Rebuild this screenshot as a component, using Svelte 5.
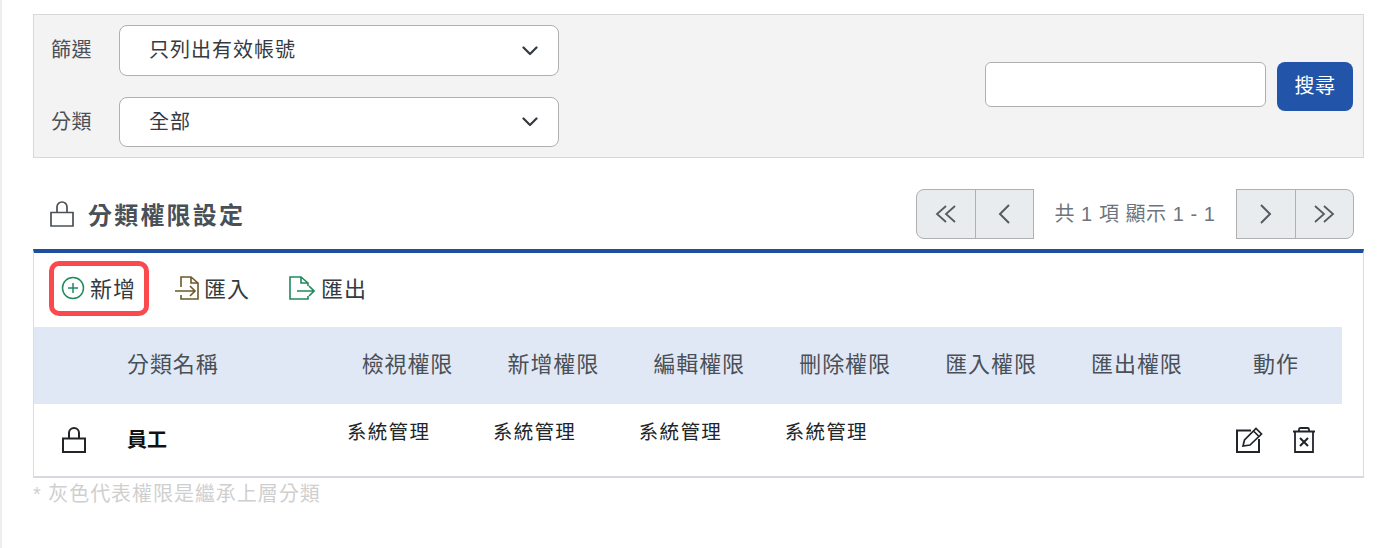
<script>
  const perms = ['檢視權限', '新增權限', '編輯權限', '刪除權限', '匯入權限', '匯出權限'];
  const granted = ['系統管理', '系統管理', '系統管理', '系統管理', '', ''];
</script>

<div class="page">
  <section class="filter">
    <div class="filter-left">
      <div class="field">
        <span class="label">篩選</span>
        <div class="select s1">
          <span>只列出有效帳號</span>
          <svg class="chev" viewBox="0 0 16 10" width="16" height="10"><path d="M1.500 1.500 8 8l6.500-6.500" fill="none" stroke="#343a40" stroke-width="2.200" stroke-linecap="round" stroke-linejoin="round"/></svg>
        </div>
      </div>
      <div class="field">
        <span class="label">分類</span>
        <div class="select s2">
          <span>全部</span>
          <svg class="chev" viewBox="0 0 16 10" width="16" height="10"><path d="M1.500 1.500 8 8l6.500-6.500" fill="none" stroke="#343a40" stroke-width="2.200" stroke-linecap="round" stroke-linejoin="round"/></svg>
        </div>
      </div>
    </div>
    <div class="search">
      <input class="search-input" type="text" aria-label="搜尋" />
      <button class="search-btn">搜尋</button>
    </div>
  </section>

  <header class="title-row">
    <h2 class="title">
      <svg viewBox="0 0 24 26" width="24" height="26" class="lock"><path d="M1 11.500h22V25H1zM7 11.500V6a5 5 0 0 1 10 0v5.500" fill="none" stroke="#495057" stroke-width="1.700"/></svg>
      <span>分類權限設定</span>
    </h2>
    <div class="pager">
      <div class="btns">
        <button class="pg first" aria-label="first"><svg viewBox="0 0 22 18" width="22" height="18"><path d="M11 1 2 9l9 8M20 1l-9 8 9 8" fill="none" stroke="#555b61" stroke-width="1.800"/></svg></button>
        <button class="pg" aria-label="prev"><svg viewBox="0 0 14 20" width="14" height="20"><path d="M12 1 3 10l9 9" fill="none" stroke="#555b61" stroke-width="2"/></svg></button>
      </div>
      <span class="count">共 1 項 顯示 1 - 1</span>
      <div class="btns">
        <button class="pg" aria-label="next"><svg viewBox="0 0 14 20" width="14" height="20"><path d="m2 1 9 9-9 9" fill="none" stroke="#555b61" stroke-width="2"/></svg></button>
        <button class="pg last" aria-label="last"><svg viewBox="0 0 22 18" width="22" height="18"><path d="m2 1 9 8-9 8M11 1l9 8-9 8" fill="none" stroke="#555b61" stroke-width="1.800"/></svg></button>
      </div>
    </div>
  </header>

  <section class="panel">
    <div class="toolbar">
      <button class="tool add">
        <svg viewBox="0 0 24 24" width="24" height="24"><circle cx="12" cy="12" r="10.500" fill="none" stroke="#1f8a5b" stroke-width="1.500"/><path d="M12 7v10M7 12h10" stroke="#1f8a5b" stroke-width="1.500"/></svg>
        <span>新增</span>
      </button>
      <button class="tool imp">
        <svg viewBox="0 0 24 24" width="24" height="24"><path d="M6 11V1h10l7 6v16H6v-4M16 1v6h7" fill="none" stroke="#6b5a2a" stroke-width="1.600"/><path d="M0 15h20M15 10l5 5-5 5" fill="none" stroke="#6b5a2a" stroke-width="1.600"/></svg>
        <span>匯入</span>
      </button>
      <button class="tool exp">
        <svg viewBox="0 0 26 24" width="26" height="24"><path d="M19 10V7l-7-6H1v22h18v-3M12 1v6h7" fill="none" stroke="#1f8a5b" stroke-width="1.600"/><path d="M8 15h17M20 10l5 5-5 5" fill="none" stroke="#1f8a5b" stroke-width="1.600"/></svg>
        <span>匯出</span>
      </button>
    </div>

    <div class="grid head">
      <div></div>
      <div class="name-h">分類名稱</div>
      {#each perms as p}<div class="c">{p}</div>{/each}
      <div class="c">動作</div>
    </div>

    <div class="grid row">
      <div class="row-lock">
        <svg viewBox="0 0 24 26" width="24" height="26"><path d="M1 11.500h22V25H1zM7 11.500V6a5 5 0 0 1 10 0v5.500" fill="none" stroke="#212529" stroke-width="2"/></svg>
      </div>
      <div class="name">員工</div>
      {#each granted as g}<div class="perm">{g}</div>{/each}
      <div class="actions">
        <svg viewBox="0 0 27 26" width="27" height="26"><path d="M15 3.500H1v21.500h22V12" fill="none" stroke="#212529" stroke-width="2"/><path d="m7 19 1.500-6L20 1.500 25.500 7 14 18zM17.500 4l5.500 5.500" fill="none" stroke="#212529" stroke-width="1.700"/></svg>
        <svg viewBox="0 0 24 26" width="24" height="26"><path d="M1 4.500h22M3 4.500V25h18V4.500M7 4V2.500Q7 1 8.500 1h7Q17 1 17 2.500V4" fill="none" stroke="#212529" stroke-width="1.800"/><path d="m8 11 8 8M16 11l-8 8" stroke="#212529" stroke-width="2"/></svg>
      </div>
    </div>
  </section>
  <p class="note">* 灰色代表權限是繼承上層分類</p>
</div>

<style>
  :global(body) {
    margin: 0;
    background: #fff;
    font-family: "Liberation Sans", "Noto Sans CJK TC", sans-serif;
    color: #495057;
  }
  .page {
    box-sizing: border-box;
    width: 1400px;
    height: 548px;
    overflow: hidden;
    border-left: 2px solid #eeeeee;
    padding: 14px 36px 0 31px;
  }
  .filter {
    box-sizing: border-box;
    height: 144px;
    background: #f3f3f3;
    border: 1px solid #d8d8d8;
    display: flex;
    justify-content: space-between;
    padding: 10px 10px 10px 17px;
  }
  .filter-left { display: flex; flex-direction: column; gap: 21px; }
  .field { display: flex; align-items: center; gap: 27px; font-size: 20px; letter-spacing: 0.500px; }
  .label { color: #495057; margin-top: -4px; }
  .select {
    box-sizing: border-box;
    width: 440px;
    background: #fff;
    border: 1px solid #b0b0b0;
    border-radius: 8px;
    padding: 0 20px 0 29px;
    display: flex;
    align-items: center;
    justify-content: space-between;
    color: #343a40;
  }
  .s1 { height: 51px; }
  .s2 { height: 50px; }
  .select span { margin-top: -3px; letter-spacing: 1px; }
  .s1 span { margin-top: -5px; }
  .search { display: flex; gap: 11px; align-items: flex-start; padding-top: 37px; }
  .search-input {
    box-sizing: border-box;
    width: 281px;
    height: 45px;
    margin: 0;
    background: #fff;
    border: 1px solid #b0b0b0;
    border-radius: 6px;
  }
  .search-btn {
    box-sizing: border-box;
    width: 76px;
    height: 49px;
    border: 0;
    border-radius: 8px;
    background: #2255aa;
    color: #fff;
    font: inherit;
    font-size: 20px;
    letter-spacing: 0.500px;
    padding: 0 0 5px;
  }
  .title-row {
    box-sizing: border-box;
    display: flex;
    justify-content: space-between;
    align-items: center;
    height: 91px;
    padding: 20px 10px 0 17px;
  }
  .title {
    margin: 0;
    display: flex;
    align-items: center;
    gap: 14px;
    font-size: 24px;
    font-weight: 700;
    letter-spacing: 2.200px;
    color: #495057;
  }
  .lock { flex: none; }
  .pager { display: flex; align-items: center; }
  .btns { display: flex; }
  .pg {
    box-sizing: border-box;
    width: 59.500px;
    height: 50px;
    margin: 0;
    padding: 0;
    background: #e9ecef;
    border: 1px solid #b0b0b0;
    display: flex;
    align-items: center;
    justify-content: center;
  }
  .pg + .pg { margin-left: -1px; }
  .first { border-radius: 8px 0 0 8px; }
  .last { border-radius: 0 8px 8px 0; }
  .count { width: 202px; text-align: center; font-size: 20px; letter-spacing: 0.550px; color: #6c757d; white-space: nowrap; padding-bottom: 3px; }
  .panel {
    box-sizing: border-box;
    height: 229px;
    border-top: 4px solid #1f4ea1;
    border-left: 1px solid #dcdcdc;
    border-right: 1px solid #dcdcdc;
    border-bottom: 2px solid #d8d8de;
    padding-right: 21px;
  }
  .toolbar { box-sizing: border-box; display: flex; align-items: center; height: 74px; padding: 0 0 4px 15px; }
  .tool {
    display: flex;
    align-items: center;
    gap: 5px;
    background: none;
    border: 0;
    padding: 0;
    margin: 0;
    font: inherit;
    font-size: 22px;
    letter-spacing: 1px;
    color: #343a40;
  }
  .tool span { margin-top: -2px; }
  .add {
    box-sizing: border-box;
    width: 100px;
    height: 55px;
    border: 5px solid #fb4a4e;
    border-radius: 10px;
    padding-left: 7px;
  }
  .imp { margin-left: 26px; }
  .exp { margin-left: 39px; gap: 6px; }
  .grid {
    display: grid;
    grid-template-columns: 81px 219.500px repeat(6, 145.900px) 1fr;
    align-items: center;
  }
  .head { box-sizing: border-box; height: 77px; padding-bottom: 8px; background: #e1e8f5; font-size: 22px; color: #495057; letter-spacing: 0.900px; }
  .name-h { padding-left: 12px; }
  .c { text-align: center; }
  .row { height: 73px; color: #212529; }
  .row-lock { display: flex; padding: 0 0 2px 28px; }
  .name { padding: 0 0 4px 12px; font-size: 20px; font-weight: 700; color: #111; }
  .perm { padding-left: 12.500px; font-size: 19.500px; letter-spacing: 1.300px; align-self: start; padding-top: 12px; }
  .actions { display: flex; gap: 29px; padding: 0 0 2px 26px; }
  .note { margin: 0; font-size: 20px; color: #cfcfcf; letter-spacing: 0.950px; }
</style>
